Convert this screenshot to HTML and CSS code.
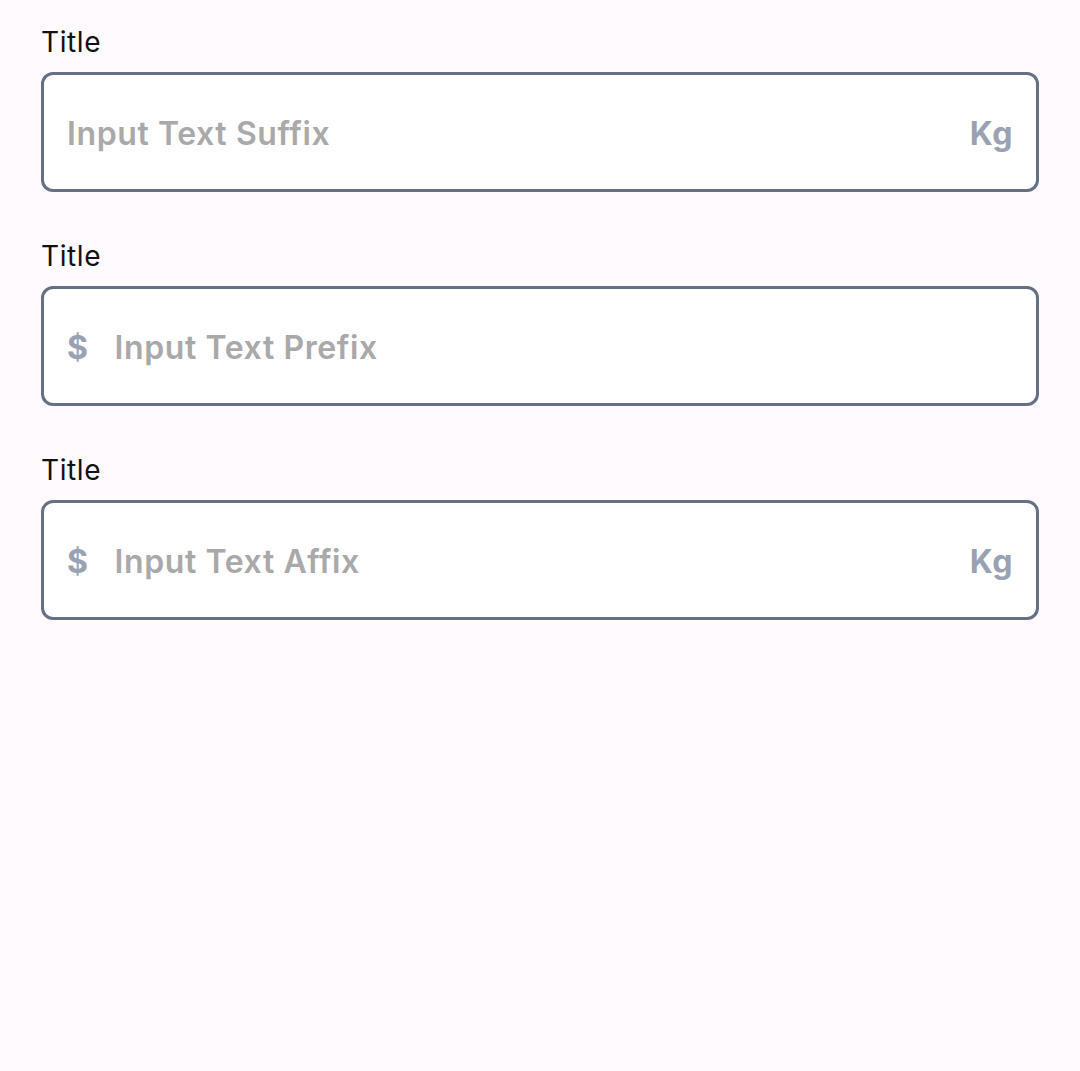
FILE: index.html
```html
<!DOCTYPE html>
<html lang="en">
<head>
<meta charset="utf-8">
<title>Inputs</title>
<link rel="stylesheet" href="styles.css">
</head>
<body>
<main class="form">
  <div class="field">
    <label class="label">Title</label>
    <div class="box">
      <span class="placeholder">Input Text Suffix</span>
      <span class="affix suffix">Kg</span>
    </div>
  </div>
  <div class="field">
    <label class="label">Title</label>
    <div class="box">
      <span class="affix prefix">$</span>
      <span class="placeholder">Input Text Prefix</span>
    </div>
  </div>
  <div class="field">
    <label class="label">Title</label>
    <div class="box">
      <span class="affix prefix">$</span>
      <span class="placeholder">Input Text Affix</span>
      <span class="affix suffix">Kg</span>
    </div>
  </div>
</main>
</body>
</html>
```
FILE: styles.css
```css
html, body {
  margin: 0;
  padding: 0;
  background: #fffafd;
  font-family: Inter, "Noto Sans", sans-serif;
}
.form {
  display: flex;
  flex-direction: column;
  gap: 47px;
  padding: 25px 41px 0 41px;
}
.field {
  display: flex;
  flex-direction: column;
}
.label {
  font-size: 28px;
  line-height: 34px;
  color: #111111;
  font-weight: 400;
  letter-spacing: 0.6px;
  margin-bottom: 13px;
}
.box {
  box-sizing: border-box;
  height: 120px;
  border: 3px solid #667085;
  border-radius: 12px;
  background: #ffffff;
  display: flex;
  align-items: center;
  padding: 2px 23px 0 23px;
  gap: 26px;
}
.placeholder {
  flex: 1;
  font-size: 32px;
  font-weight: 600;
  letter-spacing: 0.6px;
  color: #a9a9a9;
}
.affix {
  font-size: 32px;
  font-weight: 700;
  letter-spacing: 0.6px;
  color: #98a2b3;
}
```
